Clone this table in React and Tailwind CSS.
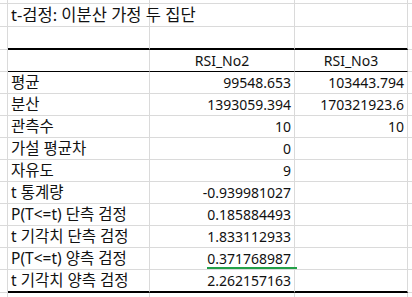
import React from "react";

const rows = [
  ["평균", "99548.653", "103443.794"],
  ["분산", "1393059.394", "170321923.6"],
  ["관측수", "10", "10"],
  ["가설 평균차", "0", ""],
  ["자유도", "9", ""],
  ["t 통계량", "-0.939981027", ""],
  ["P(T<=t) 단측 검정", "0.185884493", ""],
  ["t 기각치 단측 검정", "1.833112933", ""],
  ["P(T<=t) 양측 검정", "0.371768987", ""],
  ["t 기각치 양측 검정", "2.262157163", ""],
];

const lines = {
  gray: "border-b border-b-[#dadada]",
  thick: "border-b-2 border-b-black",
  thin: "border-b border-b-black",
};

function Row({ h, edge = "gray", label, mid, right, center, mark }) {
  const bottom = lines[edge];
  return (
    <div className={`flex ${h}`}>
      <div className="w-[8px] h-full border-r border-r-[#dadada] border-b border-b-[#dadada]" />
      <div className={`w-[142px] h-full border-r border-r-[#dadada] ${bottom} flex items-center pl-[3px] whitespace-nowrap text-[15.5px]`}>
        {label}
      </div>
      <div
        className={`relative w-[145px] h-full border-r border-r-[#dadada] ${bottom} flex items-center ${center ? "justify-center" : "justify-end pr-[3px]"}`}
      >
        {mid}
        {mark && <div className="absolute left-[57px] -right-[3px] bottom-[0px] h-[2px] bg-[#23a048]" />}
      </div>
      <div
        className={`w-[113px] h-full border-r border-r-[#dadada] ${bottom} flex items-center ${center ? "justify-center" : "justify-end pr-[3px]"}`}
      >
        {right}
      </div>
      <div className="flex-1 h-full border-b border-b-[#dadada]" />
    </div>
  );
}

export default function App() {
  return (
    <div className="w-[412px] h-[297px] overflow-hidden bg-white text-[#111] text-[14px] leading-none font-['Noto_Sans','Noto_Sans_CJK_KR',sans-serif]">
      <Row h="h-[4px]" />
      <Row h="h-[23px]" label={<span className="text-[16.5px]">t-검정: 이분산 가정 두 집단</span>} />
      <Row h="h-[23px]" edge="thick" />
      <Row h="h-[22px]" edge="thin" mid="RSI_No2" right="RSI_No3" center />
      {rows.map(([label, mid, right], i) => (
        <Row
          key={label}
          h={i === rows.length - 1 ? "h-[23px]" : "h-[22px]"}
          edge={i === rows.length - 1 ? "thick" : "gray"}
          label={label}
          mid={mid}
          right={right}
          mark={i === 8}
        />
      ))}
      <Row h="h-[22px]" />
    </div>
  );
}
